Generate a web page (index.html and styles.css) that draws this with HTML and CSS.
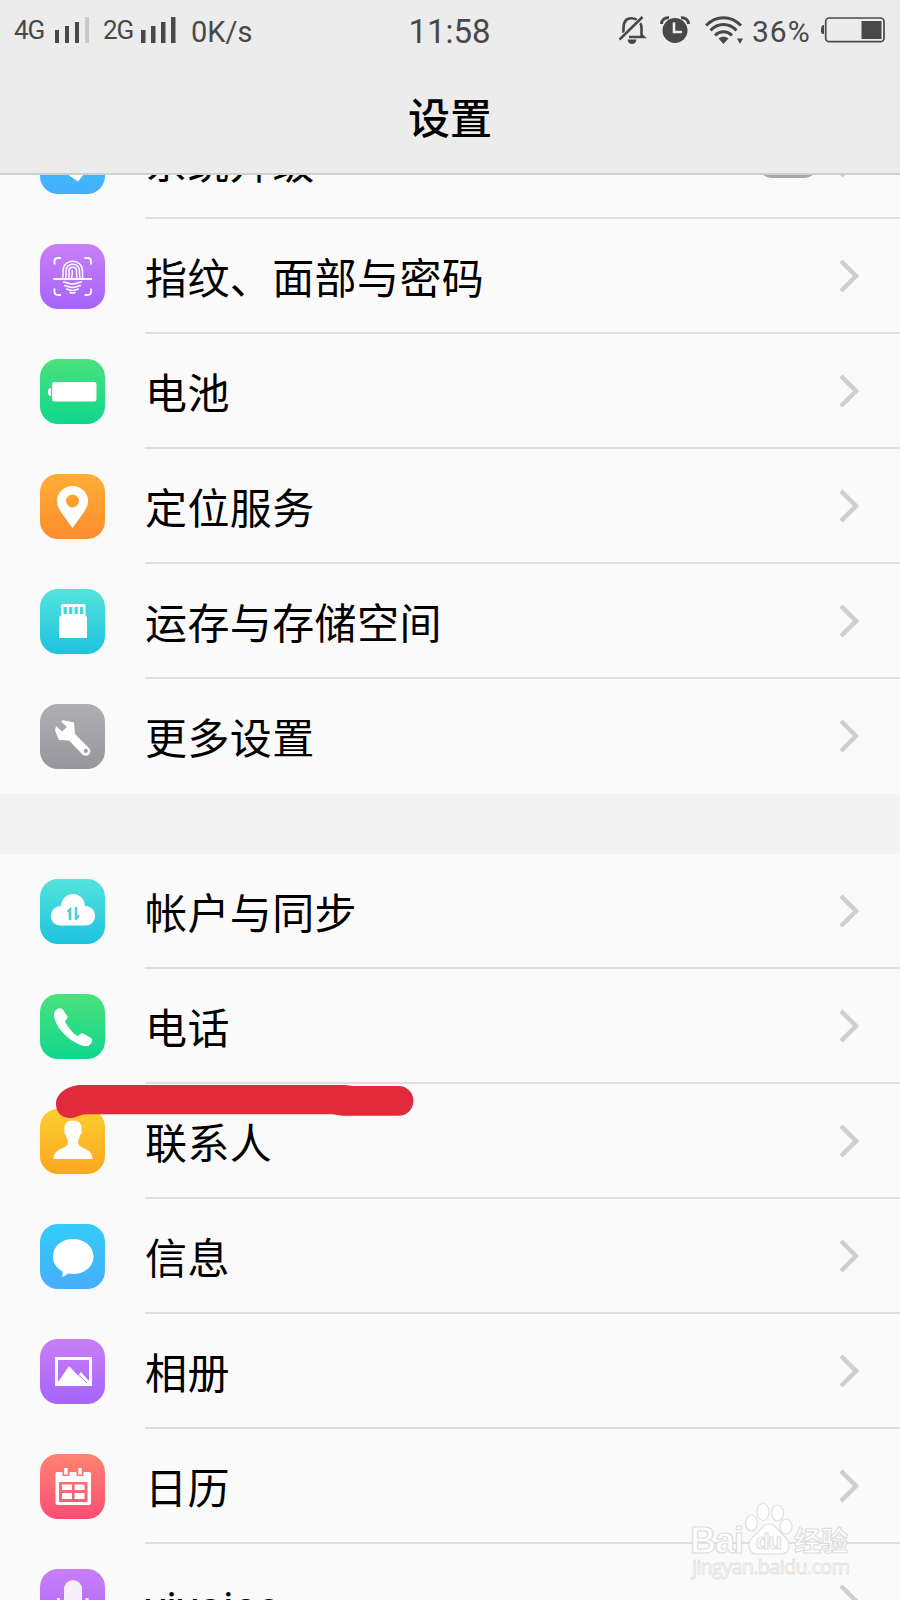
FILE: index.html
```html
<!DOCTYPE html>
<html lang="zh-CN">
<head>
    <meta charset="UTF-8">
    <meta name="viewport" content="width=device-width, initial-scale=1.0">
    <title>设置</title>
    <link rel="stylesheet" href="styles.css">
</head>
<body>
    <header class="header">
        <div class="status-bar">
            <div class="status-left">
                <span class="network">4G</span>
                <svg class="signal" width="36" height="26" viewBox="0 0 36 26">
                    <path d="M0 13h4v13H0zM10 9h4v17h-4zM20 5h4v21h-4z" fill="#484848"/>
                    <path d="M30 0h4v26h-4z" fill="#cacaca"/>
                </svg>
                <span class="network second">2G</span>
                <svg class="signal" width="36" height="26" viewBox="0 0 36 26">
                    <path d="M0 13h4.500v13H0zM10 9h4.500v17H10zM20 5h4.500v21H20zM30 0h4.500v26H30z" fill="#484848"/>
                </svg>
                <span class="speed">0K/s</span>
            </div>
            <div class="time">11:58</div>
            <div class="status-right">
                <svg class="bell" width="28" height="28" viewBox="0 0 28 28">
                    <path d="M4.500 17V12C4.500 5 8 2.200 12.500 2.200S22.500 6 22.500 12v7l2 2H10" fill="none" stroke="#484848" stroke-width="2.600"/>
                    <path d="M8.500 23.500h9c-.5 3-2 4.500-4.500 4.500s-4-1.500-4.500-4.500z" fill="#484848"/>
                    <path d="M1 23.500L24 1" stroke="#ececec" stroke-width="5"/>
                    <path d="M0.500 23.500L23.500 1" stroke="#484848" stroke-width="2.600"/>
                </svg>
                <svg class="clock" width="30" height="28" viewBox="0 0 30 28">
                    <circle cx="15" cy="14.500" r="12.500" fill="#484848"/>
                    <path d="M1.500 8C1.500 4 5 1.200 9 1.800M28.500 8c0-4-3.500-6.800-7.500-6.200" fill="none" stroke="#484848" stroke-width="3"/>
                    <path d="M14 6.500V16h8" fill="none" stroke="#ececec" stroke-width="2.600"/>
                </svg>
                <svg class="wifi" width="38" height="28" viewBox="0 0 38 28">
                    <path d="M1 9.500C11-1 26-1 36 9.500M5.500 14.500c7.500-8 18.500-8 26 0M10 19.500c5-5 12-5 17 0" fill="none" stroke="#484848" stroke-width="3"/>
                    <path d="M13.500 22.500c3-2.500 7-2.500 10 0L18.500 28zM32 22.500h6L35 28z" fill="#484848"/>
                </svg>
                <span class="percent">36%</span>
                <svg class="battery" width="65" height="26" viewBox="0 0 65 26">
                    <path d="M4 8C1.500 8 1 10 1 13s.5 4 3 4z" fill="#484848"/>
                    <rect x="5.700" y="1" width="58.300" height="23.700" rx="3.500" fill="none" stroke="#484848" stroke-width="1.700"/>
                    <rect x="41.500" y="4" width="20" height="18" fill="#484848"/>
                </svg>
            </div>
        </div>
        <h1>设置</h1>
    </header>

    <main class="content">
        <ul class="list first">
            <li class="row">
                <span class="icon blue"><svg viewBox="0 0 65 65"><path d="M30 12h15v32L38 52.500 27 45h3z" fill="#fff"/></svg></span>
                <div class="item"><span class="label">系统升级</span><span class="badge"></span><svg class="arrow" viewBox="0 0 20 34"><path d="M2 2l15 15L2 32"/></svg></div>
            </li>
            <li class="row">
                <span class="icon purple">
                    <svg viewBox="0 0 65 65" fill="none" stroke="#fff">
                        <path d="M14.500 20.500v-3q0-3.500 3.500-3.500h3M44.500 14h3q3.500 0 3.500 3.500v3M14.500 44.500v3q0 3.500 3.500 3.500h3M44.500 51h3q3.500 0 3.500-3.500v-3M13.500 35h38.500" stroke-width="1.800"/>
                        <path d="M22.500 34c1-2 .5-4 .5-7 0-13 19.500-13 19.500 0v7M25.500 34c1-2 .5-4 .5-7 0-9 13.500-9 13.500 0 0 3 0 5 .5 7M28.500 34c1-2 .5-4 .5-7 0-5 7.500-5 7.500 0 0 3 0 5 .5 7M31.500 34c1-3 .8-5 .8-8" stroke-width="1.500"/>
                        <path d="M23 38c4 0 5 2 9.500 2s5.500-2 9.500-2M24 41.500c3 0 5 2 8.500 2s5.500-2 8.500-2M26 45c3 0 3 1.500 6.500 1.500s4.500-1.500 6.500-1.500M29.500 48.500q3 1 6 0" stroke-width="1.600"/>
                    </svg>
                </span>
                <div class="item"><span class="label">指纹、面部与密码</span><svg class="arrow" viewBox="0 0 20 34"><path d="M2 2l15 15L2 32"/></svg></div>
            </li>
            <li class="row">
                <span class="icon green">
                    <svg viewBox="0 0 65 65" fill="#fff"><rect x="12" y="23" width="44.500" height="19.500" rx="2.500"/><path d="M11 29v8C8.500 37 8 35.500 8 33s.5-4 3-4z"/></svg>
                </span>
                <div class="item"><span class="label">电池</span><svg class="arrow" viewBox="0 0 20 34"><path d="M2 2l15 15L2 32"/></svg></div>
            </li>
            <li class="row">
                <span class="icon orange">
                    <svg viewBox="0 0 65 65"><path d="M32.500 12C23.500 12 17 19 17 27c0 8 8 16 15.500 27C40 43 48 35 48 27c0-8-6.500-15-15.500-15zm0 8.500a6.500 6.500 0 1 1 0 13 6.500 6.500 0 0 1 0-13z" fill="#fff" fill-rule="evenodd"/></svg>
                </span>
                <div class="item"><span class="label">定位服务</span><svg class="arrow" viewBox="0 0 20 34"><path d="M2 2l15 15L2 32"/></svg></div>
            </li>
            <li class="row">
                <span class="icon cyan">
                    <svg viewBox="0 0 65 65"><path d="M22 15h22.500l1 1v10.500l1.500 1.500v21H19V28l2-1.500V16zM23.500 18v7h3.300v-7zM29 18v7h3.300v-7zM34.500 18v7h3.300v-7zM40 18v7h3.300v-7z" fill="#fff" fill-rule="evenodd"/></svg>
                </span>
                <div class="item"><span class="label">运存与存储空间</span><svg class="arrow" viewBox="0 0 20 34"><path d="M2 2l15 15L2 32"/></svg></div>
            </li>
            <li class="row">
                <span class="icon gray">
                    <svg viewBox="0 0 65 65"><path d="M22.500 16L34 18.500l1 11.500 14 14a4.500 4.500 0 0 1-6.500 6.500L29 36.500 19 36 15 26.500l1-4.500 6 5.500 5-4.500-5.500-5zM45.800 44.800a2 2 0 1 0 0 4.200 2 2 0 0 0 0-4.200z" fill="#fff" fill-rule="evenodd"/></svg>
                </span>
                <div class="item"><span class="label">更多设置</span><svg class="arrow" viewBox="0 0 20 34"><path d="M2 2l15 15L2 32"/></svg></div>
            </li>
        </ul>

        <ul class="list">
            <li class="row">
                <span class="icon cyan">
                    <svg viewBox="0 0 65 65"><path d="M21 46.500c-13.500 0-13.500-19 0-19.500C22 11 44 11 45 27c13.500.5 13.500 19.500 0 19.500z" fill="#fff"/><path d="M27.500 31l3.800-3v13h-2.600v-8l-1.700.5zM34.800 28h2.500v8.500l2-.5v2l-3 3h-1.500z" fill="#48cfd8"/></svg>
                </span>
                <div class="item"><span class="label">帐户与同步</span><svg class="arrow" viewBox="0 0 20 34"><path d="M2 2l15 15L2 32"/></svg></div>
            </li>
            <li class="row">
                <span class="icon green">
                    <svg viewBox="0 0 65 65"><path d="M15.500 16.500c2-3 6.500-3 8 0l4 6c.5 2-2 3-2.500 5 3 6 6.500 10 12 14.500 2 .5 3-3.500 6-2.500l8 4.500c3 2-.5 7-3 8C37 54 13 35 14 19z" fill="#fff"/></svg>
                </span>
                <div class="item"><span class="label">电话</span><svg class="arrow" viewBox="0 0 20 34"><path d="M2 2l15 15L2 32"/></svg></div>
            </li>
            <li class="row">
                <span class="icon yellow">
                    <svg viewBox="0 0 65 65"><path d="M33 11.500c6 0 9 3.500 8.500 8.500.8 3-.3 5.500-1.500 6.500-.5 3-2 4-2 6.500 0 8 14 4.500 14.500 17h-39C14 37.500 28 41 28 33c0-2.500-1.500-3.500-2-6.500-1.200-1-2.300-3.500-1.500-6.500-.5-5 2.500-8.500 8.500-8.500z" fill="#fff"/></svg>
                </span>
                <div class="item"><span class="label">联系人</span><svg class="arrow" viewBox="0 0 20 34"><path d="M2 2l15 15L2 32"/></svg></div>
                <svg class="marker" width="358" height="35" viewBox="0 0 358 35"><path d="M15 34C3 34 0 26 0 20 0 8 14 1 26 1h260c7 0 7 1 13 1h43.500a14.500 14.500 0 0 1 0 29.800h-54c-6 0-8-1.500-14-1.500H32C23 30.300 21 34 15 34z" fill="#e12a3c"/></svg>
            </li>
            <li class="row">
                <span class="icon blue">
                    <svg viewBox="0 0 65 65"><path d="M33 15c11.500 0 20.500 7.500 20.500 17.500S44.500 50 33 50l-5-.6c-2 2-4 3-6.500 3.300 1-1.500 1.500-3 1-5.200C16 44 13 38.500 13 32.500 13 22.500 21.500 15 33 15z" fill="#fff"/></svg>
                </span>
                <div class="item"><span class="label">信息</span><svg class="arrow" viewBox="0 0 20 34"><path d="M2 2l15 15L2 32"/></svg></div>
            </li>
            <li class="row">
                <span class="icon purple">
                    <svg viewBox="0 0 65 65"><path d="M15 18h37v29H15zM18 21v22L29 27l9 9.500 3-3.500 8 9V21z" fill="#fff" fill-rule="evenodd"/><path d="M37.500 35L47 44" stroke="#b473f5" stroke-width="1"/></svg>
                </span>
                <div class="item"><span class="label">相册</span><svg class="arrow" viewBox="0 0 20 34"><path d="M2 2l15 15L2 32"/></svg></div>
            </li>
            <li class="row">
                <span class="icon red">
                    <svg viewBox="0 0 65 65"><path d="M17 18h5.500v4h7v-4h7v4h7v-4H49q2 0 2 2v29q0 2-2 2H17.500q-2 0-2-2V20q0-2 1.500-2zM19 28v20h28.500V28z" fill="#fff" fill-rule="evenodd"/><path d="M24.200 14h3.500v6.500h-3.500zM38.300 14h3.500v6.500h-3.500zM22 30.500h10V36H22zM34.500 30.500h10V36h-10zM22 39h10v6H22zM34.500 39h10v6h-10z" fill="#fff"/></svg>
                </span>
                <div class="item"><span class="label">日历</span><svg class="arrow" viewBox="0 0 20 34"><path d="M2 2l15 15L2 32"/></svg></div>
            </li>
            <li class="row">
                <span class="icon purple">
                    <svg viewBox="0 0 65 65"><rect x="24" y="11" width="18" height="31" rx="9" fill="#f8f0ff"/><path d="M18.500 29v4c0 19 28.500 19 28.500 0v-4M33 47v8" fill="none" stroke="#f8f0ff" stroke-width="3"/></svg>
                </span>
                <div class="item"><span class="label latin">vivoice</span><svg class="arrow" viewBox="0 0 20 34"><path d="M2 2l15 15L2 32"/></svg></div>
            </li>
        </ul>
    </main>

    <div class="watermark">
        <svg width="164" height="82" viewBox="0 0 164 82">
            <g fill="#fff" stroke="#dedede" stroke-width="1.200">
                <ellipse cx="61.500" cy="23" rx="6" ry="8"/>
                <ellipse cx="73" cy="12" rx="6" ry="8.500"/>
                <ellipse cx="87.500" cy="13" rx="6" ry="8"/>
                <ellipse cx="96" cy="26.500" rx="6" ry="7.500"/>
                <path d="M79 24c7 0 9 7 14 11 9 7 8 19-3 19H68c-11 0-12-12-3-19 5-4 7-11 14-11z"/>
                <text class="wm-logo" x="0" y="52.500" textLength="54">Bai</text>
                <text class="wm-du" x="66" y="49" textLength="26">du</text>
                <text class="wm-cn" x="104" y="51" textLength="54">经验</text>
                <text class="wm-url" x="2" y="74" textLength="158">jingyan.baidu.com</text>
            </g>
        </svg>
    </div>
</body>
</html>
```
FILE: styles.css
```css
* {
    box-sizing: border-box;
}
body {
    margin: 0;
    height: 1600px;
    display: flex;
    flex-direction: column;
    overflow: hidden;
    position: relative;
    background-color: #f3f3f3;
    color: #000;
    font-family: Roboto, "Noto Sans CJK SC", sans-serif;
}
.header {
    height: 175px;
    flex: none;
    background-color: #ececec;
    border-bottom: 2px solid #cfcfcf;
}
.status-bar {
    height: 60px;
    padding: 0 15px 0 14px;
    display: grid;
    grid-template-columns: 1fr auto 1fr;
    align-items: center;
    color: #484848;
}
.status-left,
.status-right {
    display: flex;
    align-items: center;
}
.status-right {
    justify-content: flex-end;
}
.network {
    width: 41px;
    font-size: 26px;
    letter-spacing: -1px;
}
.network.second {
    width: 38px;
    margin-left: 12px;
}
.speed {
    margin-left: 14px;
    font-size: 29px;
    padding-top: 3px;
}
.time {
    font-size: 33px;
    padding-top: 3px;
}
.clock {
    margin-left: 13px;
}
.wifi {
    margin-left: 15px;
}
.percent {
    width: 68px;
    margin-left: 9px;
    font-size: 30px;
    letter-spacing: 1px;
    padding-top: 3px;
}
h1 {
    margin: 0;
    height: 113px;
    padding-top: 3px;
    line-height: 113px;
    font-size: 42px;
    font-weight: 500;
    text-align: center;
}
.content {
    flex: 1;
    overflow: hidden;
}
.list {
    list-style: none;
    margin: 0 0 60px;
    padding: 0;
    background-color: #fafafa;
}
/* the list is scrolled, the first row is half under the header */
.list.first {
    margin-top: -71px;
}
.row {
    position: relative;
    height: 115px;
    padding-left: 40px;
    display: flex;
    align-items: center;
}
.icon {
    width: 65px;
    height: 65px;
    flex: none;
    border-radius: 18px;
}
.icon svg {
    display: block;
    width: 65px;
    height: 65px;
}
.blue {
    background: linear-gradient(#33ccfb, #46aefd);
}
.purple {
    background: linear-gradient(#ca7ff6, #a564fb);
}
.green {
    background: linear-gradient(#4be17d, #0fd78c);
}
.orange {
    background: linear-gradient(#feae35, #fe8c2e);
}
.cyan {
    background: linear-gradient(#54e3dc, #1dc3de);
}
.gray {
    background: linear-gradient(#afaeb3, #97969c);
}
.yellow {
    background: linear-gradient(#fdcd31, #fba71e);
}
.red {
    background: linear-gradient(#fe8470, #fe4d75);
}
.item {
    flex: 1;
    height: 115px;
    margin-left: 40px;
    padding-right: 41px;
    display: flex;
    align-items: center;
    border-bottom: 2px solid #dfdfdf;
}
.row:last-child .item {
    border-bottom-color: transparent;
}
.label {
    flex: 1;
    font-size: 42px;
    line-height: 60px;
    letter-spacing: 0.4px;
    padding-top: 8px;
}
.label.latin {
    font-size: 43px;
    padding-top: 12px;
}
.badge {
    width: 64px;
    height: 35px;
    margin-right: 19px;
    border-radius: 17px;
    background-color: #a6a8b1;
}
.arrow {
    width: 20px;
    height: 34px;
    fill: none;
    stroke: #cfcfcf;
    stroke-width: 4.5;
}
.marker {
    position: absolute;
    left: 56px;
    top: 0;
}
.watermark {
    position: absolute;
    left: 690px;
    top: 1500px;
}
.wm-logo {
    font: bold 36px "Liberation Sans", sans-serif;
}
.wm-du {
    font: bold 22px "Liberation Sans", sans-serif;
}
.wm-cn {
    font: bold 27px "Noto Sans CJK SC", sans-serif;
}
.wm-url {
    font: 20px "Open Sans", sans-serif;
    stroke-width: 0.8;
}
```
